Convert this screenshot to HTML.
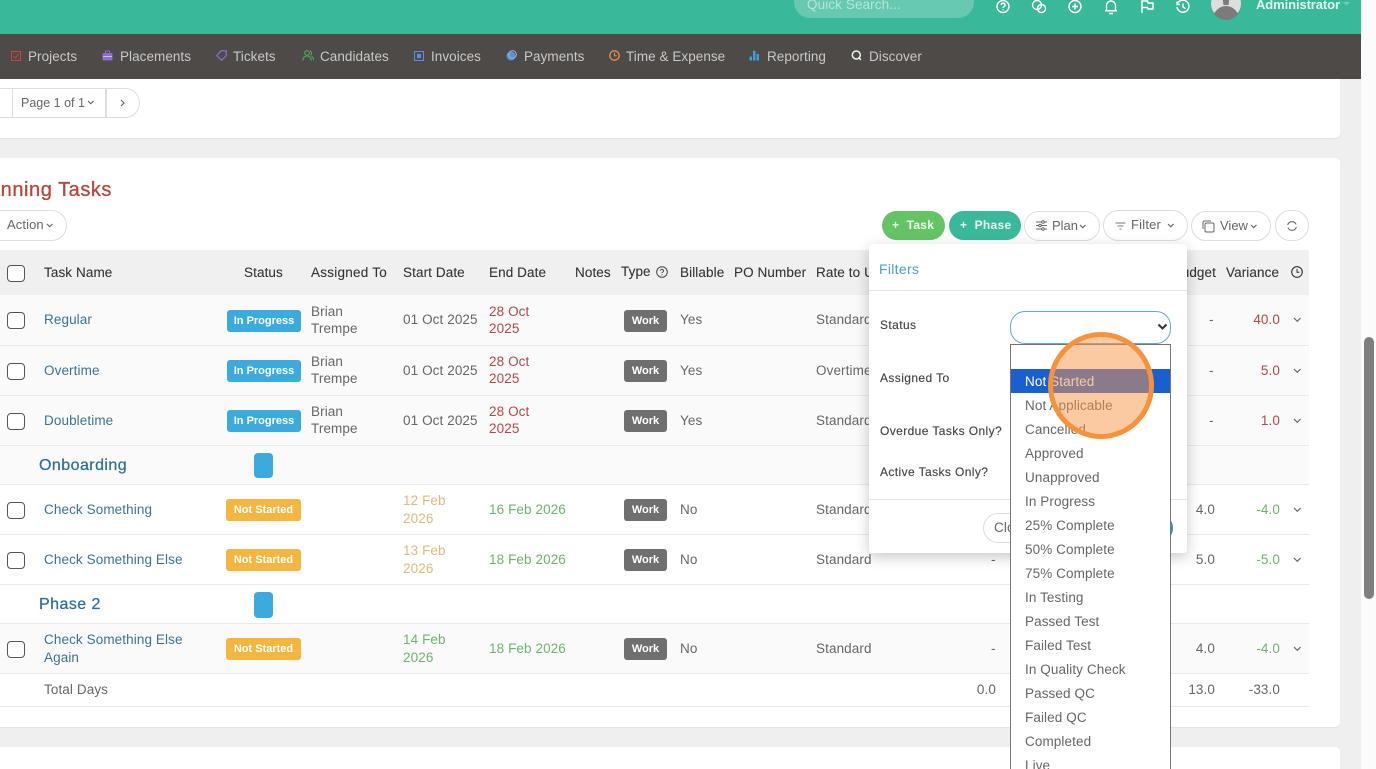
<!DOCTYPE html>
<html><head><meta charset="utf-8"><style>
html,body{margin:0;padding:0;width:1376px;height:769px;overflow:hidden;background:#efefef}
body{position:relative;font-family:"Liberation Sans",sans-serif;color:#666;font-size:13px}
.b{position:absolute}
.t{position:absolute;white-space:nowrap;line-height:16px;font-size:13.5px;letter-spacing:.1px;color:#666;margin-top:1px}
.s{font-size:13px;letter-spacing:0}
.f{font-size:12px;color:#444;letter-spacing:.4px;margin-top:0;-webkit-text-stroke:.15px #444}
.h{color:#333;-webkit-text-stroke:.1px #333}
.l{color:#3d7391}
.r{color:#b5474a}
.g{color:#6cb56c}
.y{color:#e3b87a}
.re{text-align:right}
.bd{position:absolute;height:22px;line-height:23px;border-radius:3px;color:#fff;font-weight:bold;font-size:11px;text-align:center;white-space:nowrap}
.ip{left:227px;width:74px;background:#3aabdc}
.ns{left:226px;width:75px;background:#f4b63f}
.w{left:624px;width:43px;background:#6f6f6f}
.cb{position:absolute;left:7px;width:16px;height:15px;border:1px solid #555;border-radius:4px;background:#fff}
.line{position:absolute;left:0;width:1309px;height:1px;background:#e9e9e9}
.pill{position:absolute;background:#fff;border:1px solid #ddd;border-radius:16px;box-sizing:border-box}
.nav{position:absolute;top:49px;line-height:16px;font-size:13.5px;color:#c9c9c9;letter-spacing:.05px;white-space:nowrap}
svg{position:absolute;overflow:visible}
.o{position:absolute;left:1025px;line-height:16px;font-size:13.5px;letter-spacing:.1px;color:#666;white-space:nowrap;margin-top:1px}
.ch{fill:none;stroke:#666;stroke-width:1.2}
.ti{fill:none;stroke:#fff;stroke-width:1.4}
.ph{font-size:16px;line-height:18px;color:#2f6f96;letter-spacing:.45px;-webkit-text-stroke:.25px #2f6f96}
</style></head><body>

<!-- right scrollbar track -->
<div class="b" style="left:1361px;top:0;width:15px;height:769px;background:#fbfbfb"></div>
<div class="b" style="left:1364px;top:337px;width:10px;height:262px;background:#7f7f7f;border-radius:5px"></div>

<!-- top bar -->
<div class="b" style="left:0;top:0;width:1361px;height:34px;background:#39b99a"></div>
<div class="b" style="left:794px;top:-14px;width:180px;height:32px;border-radius:16px;background:#66c9b0"></div>
<div class="t" style="left:807px;top:-4px;color:#b5e7da">Quick Search...</div>
<svg style="left:996px;top:0" width="15" height="15" viewBox="0 0 15 15"><circle class="ti" cx="7" cy="6.500" r="6"/><path class="ti" d="M5.200 5a1.900 1.900 0 1 1 2.600 1.800c-.6.300-.8.700-.8 1.200M7 9.400v1"/></svg>
<svg style="left:1031px;top:0" width="16" height="14" viewBox="0 0 16 14"><circle class="ti" cx="6" cy="5" r="4.500"/><circle class="ti" cx="10.500" cy="8.500" r="4"/></svg>
<svg style="left:1068px;top:0" width="14" height="14" viewBox="0 0 14 14"><circle class="ti" cx="7" cy="6.500" r="6"/><path class="ti" d="M7 3.500v6M4 6.500h6"/></svg>
<svg style="left:1104px;top:0" width="14" height="15" viewBox="0 0 14 15"><path class="ti" d="M2.500 10.500V5.500a4.500 4.500 0 0 1 9 0v5M1 10.800h12M5 13.500h4"/></svg>
<svg style="left:1141px;top:0" width="13" height="14" viewBox="0 0 13 14"><path class="ti" d="M1 13V1h5.500l.5 2h5v6H7l-.5-1.500H1"/></svg>
<svg style="left:1176px;top:0" width="14" height="14" viewBox="0 0 14 14"><path class="ti" d="M1.200 4.500A6 6 0 1 1 1 7M1 1.500v3h3M7 3.500v3.500l2.500 1.500"/></svg>
<svg style="left:1211px;top:-12px" width="30" height="31" viewBox="0 0 30 31"><circle cx="15" cy="15.500" r="15" fill="#dedede"/><path d="M3 26c3-6 8-8 12-8s9 2 12 8a15 15 0 0 1-24 0z" fill="#7b7b7b"/><path d="M11 6h8l-1.500 11h-5z" fill="#7b7b7b"/></svg>
<div class="t" style="left:1256px;top:-4px;color:#e6f7f2;font-weight:bold;font-size:13px;letter-spacing:-.1px">Administrator</div>
<svg style="left:1343px;top:2px" width="8" height="4"><path d="M0 0h7L3.500 3.500z" fill="#6fcdb5"/></svg>

<!-- nav -->
<div class="b" style="left:0;top:34px;width:1361px;height:45px;background:#4d4a48"></div>
<svg style="left:11px;top:51px" width="10" height="10"><rect x=".5" y=".5" width="9" height="9" fill="none" stroke="#c8473d"/><path d="M2.500 5l2 2 3-4" fill="none" stroke="#c8473d"/></svg>
<div class="nav" style="left:28px">Projects</div>
<svg style="left:102px;top:50px" width="11" height="11"><rect x=".5" y="3" width="10" height="7.500" rx="1" fill="#8a6fd0"/><path d="M3.500 3V1h4v2" fill="none" stroke="#8a6fd0"/><path d="M1 6.500h9" stroke="#c9bce8"/></svg>
<div class="nav" style="left:120px">Placements</div>
<svg style="left:216px;top:50px" width="11" height="11"><path d="M5 .8h5.200v5L5.500 10.300.8 5.600z" fill="none" stroke="#8a6fd0" stroke-width="1.200"/></svg>
<div class="nav" style="left:233px">Tickets</div>
<svg style="left:302px;top:50px" width="12" height="11"><g fill="none" stroke="#4cae5c" stroke-width="1.100"><circle cx="5" cy="3" r="2.300"/><path d="M.8 10.500c0-3 2-4.500 4.200-4.500s4.200 1.500 4.200 4.500M8 1c1.500.3 2 3 .5 4.300M9.500 6.500c1.200.6 2 2 2 3.500"/></g></svg>
<div class="nav" style="left:320px">Candidates</div>
<svg style="left:414px;top:51px" width="10" height="10"><rect x=".5" y=".5" width="9" height="9" fill="none" stroke="#5c8fd6"/><rect x="3" y="3" width="4" height="4" fill="#5c8fd6"/></svg>
<div class="nav" style="left:431px">Invoices</div>
<svg style="left:506px;top:50px" width="11" height="11"><circle cx="5" cy="6" r="4.500" fill="#5c8fd6"/><circle cx="6.500" cy="4.500" r="3.800" fill="none" stroke="#9dbde8" stroke-width=".9"/></svg>
<div class="nav" style="left:524px">Payments</div>
<svg style="left:609px;top:50px" width="11" height="11"><circle cx="5.500" cy="5.500" r="4.700" fill="none" stroke="#e48f4e" stroke-width="1.300"/><path d="M5.500 2.800v2.900h2.300" fill="none" stroke="#e48f4e"/></svg>
<div class="nav" style="left:626px">Time &amp; Expense</div>
<svg style="left:749px;top:50px" width="11" height="11"><path d="M.5 6.500h2.500v4H.5zM4 .8h2.500v9.700H4zM7.500 4H10v6.500H7.500z" fill="#3f9ed6"/></svg>
<div class="nav" style="left:767px">Reporting</div>
<svg style="left:851px;top:50px" width="12" height="12"><circle cx="5.300" cy="5" r="4" fill="none" stroke="#f2f2f2" stroke-width="1.500"/><path d="M7.500 7.500l2.500 2.300" stroke="#f2f2f2" stroke-width="1.500"/></svg>
<div class="nav" style="left:869px">Discover</div>

<!-- card 1 -->
<div class="b" style="left:-6px;top:79px;width:1346px;height:59px;background:#fff;border-radius:0 0 5px 5px;box-shadow:0 1px 1px #e2e2e2"></div>
<div class="pill" style="left:-30px;top:88px;width:170px;height:30px"></div>
<div class="b" style="left:12px;top:88px;width:1px;height:30px;background:#ddd"></div>
<div class="b" style="left:105px;top:88px;width:2px;height:30px;background:#ddd"></div>
<div class="t s" style="left:21px;top:94px;font-size:12.5px">Page 1 of 1</div>
<svg style="left:87px;top:100px" width="8" height="6"><path class="ch" d="M1 1l2.700 2.700L6.500 1"/></svg>
<svg style="left:120px;top:99px" width="6" height="8"><path class="ch" d="M1 1l3 3-3 3"/></svg>

<!-- card 2 -->
<div class="b" style="left:-6px;top:158px;width:1346px;height:569px;background:#fff;border-radius:5px;box-shadow:0 1px 1px #e2e2e2"></div>
<div class="t" style="right:1264px;top:177px;font-size:20px;line-height:24px;color:#b5473a;letter-spacing:.55px;-webkit-text-stroke:.3px #b5473a">Planning Tasks</div>

<div class="pill" style="left:-40px;top:210px;width:107px;height:31px"></div>
<div class="t s" style="left:7px;top:216px;letter-spacing:.1px">Action</div>
<svg style="left:46px;top:223px" width="8" height="6"><path class="ch" d="M1 1l2.700 2.700L6.500 1"/></svg>

<div class="b" style="left:882px;top:211px;width:63px;height:29px;border-radius:15px;background:#64c465"></div>
<div class="t" style="left:892px;top:216px;color:#eaf7ea;font-size:12px;font-weight:bold;letter-spacing:.3px">+&nbsp;&nbsp;Task</div>
<div class="b" style="left:949px;top:211px;width:72px;height:29px;border-radius:15px;background:#39b99a"></div>
<div class="t" style="left:960px;top:216px;color:#e5f6f1;font-size:12px;font-weight:bold;letter-spacing:.3px">+&nbsp; Phase</div>
<div class="pill" style="left:1024px;top:211px;width:76px;height:30px"></div>
<svg style="left:1036px;top:220px" width="11" height="11"><g stroke="#666" fill="#fff"><path d="M0 2h11M0 5.500h11M0 9h11"/><circle cx="7" cy="2" r="1.300"/><circle cx="4" cy="5.500" r="1.300"/><circle cx="7" cy="9" r="1.300"/></g></svg>
<div class="t s" style="left:1052px;top:217px">Plan</div>
<svg style="left:1079px;top:224px" width="8" height="6"><path class="ch" d="M1 1l2.700 2.700L6.500 1"/></svg>
<div class="pill" style="left:1103px;top:210px;width:85px;height:31px"></div>
<svg style="left:1115px;top:222px" width="11" height="8"><path d="M.5 1h10M2.500 4h6M4.500 7h2" stroke="#777" fill="none"/></svg>
<div class="t s" style="left:1131px;top:216px;letter-spacing:.2px">Filter</div>
<svg style="left:1167px;top:223px" width="8" height="6"><path class="ch" d="M1 1l2.700 2.700L6.500 1"/></svg>
<div class="pill" style="left:1191px;top:211px;width:80px;height:30px"></div>
<svg style="left:1202px;top:220px" width="13" height="13"><rect x="3" y="3" width="9" height="9" rx="1.500" fill="none" stroke="#666"/><path d="M1 9V2.500A1.500 1.500 0 0 1 2.500 1H9" fill="none" stroke="#666"/></svg>
<div class="t s" style="left:1220px;top:217px">View</div>
<svg style="left:1250px;top:224px" width="8" height="6"><path class="ch" d="M1 1l2.700 2.700L6.500 1"/></svg>
<div class="pill" style="left:1275px;top:210px;width:34px;height:31px"></div>
<svg style="left:1287px;top:221px" width="10" height="10"><path d="M.7 4A4.400 4.400 0 0 1 9 3.300M9.300 6A4.400 4.400 0 0 1 1 6.700" fill="none" stroke="#666" stroke-width="1.100"/></svg>

<!-- table backgrounds -->
<div class="b" style="left:0;top:250px;width:1309px;height:45px;background:#f0f0f0"></div>
<div class="b" style="left:0;top:295px;width:1309px;height:189px;background:#fafafa"></div>
<div class="b" style="left:0;top:623px;width:1309px;height:50px;background:#fafafa"></div>
<div class="line" style="top:345px"></div>
<div class="line" style="top:395px"></div>
<div class="line" style="top:445px"></div>
<div class="line" style="top:484px"></div>
<div class="line" style="top:534px"></div>
<div class="line" style="top:584px"></div>
<div class="line" style="top:623px"></div>
<div class="line" style="top:673px"></div>
<div class="line" style="top:706px"></div>

<!-- header -->
<div class="cb" style="top:265px"></div>
<div class="t h" style="left:44px;top:264px">Task Name</div>
<div class="t h" style="left:244px;top:264px">Status</div>
<div class="t h" style="left:311px;top:264px;letter-spacing:.25px">Assigned To</div>
<div class="t h" style="left:403px;top:264px">Start Date</div>
<div class="t h" style="left:489px;top:264px">End Date</div>
<div class="t h" style="left:575px;top:264px">Notes</div>
<div class="t h" style="left:621px;top:263px">Type</div>
<svg style="left:656px;top:266px" width="12" height="12"><circle cx="6" cy="6" r="5.300" fill="none" stroke="#444"/><path d="M4.500 4.700a1.500 1.500 0 1 1 2.200 1.400c-.5.300-.7.500-.7 1M6 8.300v1" fill="none" stroke="#444"/></svg>
<div class="t h" style="left:680px;top:264px">Billable</div>
<div class="t h" style="left:734px;top:264px">PO Number</div>
<div class="t h" style="left:816px;top:264px">Rate to Use</div>
<div class="t h re" style="left:1146px;width:70px;top:264px">Budget</div>
<div class="t h" style="left:1226px;top:264px">Variance</div>
<svg style="left:1291px;top:266px" width="12" height="12"><circle cx="6" cy="6" r="5.300" fill="none" stroke="#333" stroke-width="1.100"/><path d="M6 3v3.300h2.500" fill="none" stroke="#333"/></svg>

<!-- row 1 -->
<div class="cb" style="top:312px"></div>
<div class="t l" style="left:44px;top:311px">Regular</div>
<div class="bd ip" style="top:310px">In Progress</div>
<div class="t" style="left:311px;top:303px">Brian</div><div class="t" style="left:311px;top:320px">Trempe</div>
<div class="t" style="left:403px;top:311px">01 Oct 2025</div>
<div class="t r" style="left:489px;top:303px">28 Oct</div><div class="t r" style="left:489px;top:320px">2025</div>
<div class="bd w" style="top:310px">Work</div>
<div class="t" style="left:680px;top:311px">Yes</div>
<div class="t" style="left:816px;top:311px">Standard</div>
<div class="t" style="left:1209px;top:311px">-</div>
<div class="t r re" style="left:1230px;width:50px;top:311px">40.0</div>
<svg style="left:1293px;top:317px" width="9" height="6"><path class="ch" d="M1 1l3.300 3.300L7.600 1"/></svg>

<!-- row 2 -->
<div class="cb" style="top:363px"></div>
<div class="t l" style="left:44px;top:362px">Overtime</div>
<div class="bd ip" style="top:360px">In Progress</div>
<div class="t" style="left:311px;top:353px">Brian</div><div class="t" style="left:311px;top:370px">Trempe</div>
<div class="t" style="left:403px;top:362px">01 Oct 2025</div>
<div class="t r" style="left:489px;top:353px">28 Oct</div><div class="t r" style="left:489px;top:370px">2025</div>
<div class="bd w" style="top:360px">Work</div>
<div class="t" style="left:680px;top:362px">Yes</div>
<div class="t" style="left:816px;top:362px">Overtime</div>
<div class="t" style="left:1209px;top:362px">-</div>
<div class="t r re" style="left:1230px;width:50px;top:362px">5.0</div>
<svg style="left:1293px;top:368px" width="9" height="6"><path class="ch" d="M1 1l3.300 3.300L7.600 1"/></svg>

<!-- row 3 -->
<div class="cb" style="top:413px"></div>
<div class="t l" style="left:44px;top:412px">Doubletime</div>
<div class="bd ip" style="top:410px">In Progress</div>
<div class="t" style="left:311px;top:403px">Brian</div><div class="t" style="left:311px;top:420px">Trempe</div>
<div class="t" style="left:403px;top:412px">01 Oct 2025</div>
<div class="t r" style="left:489px;top:403px">28 Oct</div><div class="t r" style="left:489px;top:420px">2025</div>
<div class="bd w" style="top:410px">Work</div>
<div class="t" style="left:680px;top:412px">Yes</div>
<div class="t" style="left:816px;top:412px">Standard</div>
<div class="t" style="left:1209px;top:412px">-</div>
<div class="t r re" style="left:1230px;width:50px;top:412px">1.0</div>
<svg style="left:1293px;top:418px" width="9" height="6"><path class="ch" d="M1 1l3.300 3.300L7.600 1"/></svg>

<!-- phase onboarding -->
<div class="t ph" style="left:39px;top:456px">Onboarding</div>
<div class="b" style="left:254px;top:453px;width:19px;height:25px;border-radius:4px;background:#3aabdc"></div>

<!-- row 4 -->
<div class="cb" style="top:502px"></div>
<div class="t l" style="left:44px;top:501px">Check Something</div>
<div class="bd ns" style="top:499px">Not Started</div>
<div class="t y" style="left:403px;top:492px">12 Feb</div><div class="t y" style="left:403px;top:510px">2026</div>
<div class="t g" style="left:489px;top:501px">16 Feb 2026</div>
<div class="bd w" style="top:499px">Work</div>
<div class="t" style="left:680px;top:501px">No</div>
<div class="t" style="left:816px;top:501px">Standard</div>
<div class="t re" style="left:1165px;width:50px;top:501px">4.0</div>
<div class="t g re" style="left:1230px;width:50px;top:501px">-4.0</div>
<svg style="left:1293px;top:507px" width="9" height="6"><path class="ch" d="M1 1l3.300 3.300L7.600 1"/></svg>

<!-- row 5 -->
<div class="cb" style="top:552px"></div>
<div class="t l" style="left:44px;top:551px">Check Something Else</div>
<div class="bd ns" style="top:549px">Not Started</div>
<div class="t y" style="left:403px;top:542px">13 Feb</div><div class="t y" style="left:403px;top:560px">2026</div>
<div class="t g" style="left:489px;top:551px">18 Feb 2026</div>
<div class="bd w" style="top:549px">Work</div>
<div class="t" style="left:680px;top:551px">No</div>
<div class="t" style="left:816px;top:551px">Standard</div>
<div class="t" style="left:991px;top:551px">-</div>
<div class="t re" style="left:1165px;width:50px;top:551px">5.0</div>
<div class="t g re" style="left:1230px;width:50px;top:551px">-5.0</div>
<svg style="left:1293px;top:557px" width="9" height="6"><path class="ch" d="M1 1l3.300 3.300L7.600 1"/></svg>

<!-- phase 2 -->
<div class="t ph" style="left:39px;top:595px">Phase 2</div>
<div class="b" style="left:254px;top:592px;width:19px;height:26px;border-radius:4px;background:#3aabdc"></div>

<!-- row 6 -->
<div class="cb" style="top:641px"></div>
<div class="t l" style="left:44px;top:631px">Check Something Else</div><div class="t l" style="left:44px;top:649px">Again</div>
<div class="bd ns" style="top:638px">Not Started</div>
<div class="t g" style="left:403px;top:631px">14 Feb</div><div class="t g" style="left:403px;top:649px">2026</div>
<div class="t g" style="left:489px;top:640px">18 Feb 2026</div>
<div class="bd w" style="top:638px">Work</div>
<div class="t" style="left:680px;top:640px">No</div>
<div class="t" style="left:816px;top:640px">Standard</div>
<div class="t" style="left:991px;top:640px">-</div>
<div class="t re" style="left:1165px;width:50px;top:640px">4.0</div>
<div class="t g re" style="left:1230px;width:50px;top:640px">-4.0</div>
<svg style="left:1293px;top:646px" width="9" height="6"><path class="ch" d="M1 1l3.300 3.300L7.600 1"/></svg>

<!-- total -->
<div class="t" style="left:44px;top:681px">Total Days</div>
<div class="t re" style="left:946px;width:50px;top:681px">0.0</div>
<div class="t re" style="left:1165px;width:50px;top:681px">13.0</div>
<div class="t re" style="left:1230px;width:50px;top:681px">-33.0</div>

<!-- card 3 -->
<div class="b" style="left:-6px;top:747px;width:1346px;height:40px;background:#fff;border-radius:5px"></div>

<!-- filter panel -->
<div class="b" style="left:869px;top:244px;width:318px;height:309px;background:#fff;border-radius:3px;box-shadow:0 4px 14px rgba(0,0,0,.22)"></div>
<div class="t" style="left:879px;top:260px;font-size:14px;color:#4b9fc9;letter-spacing:.3px">Filters</div>
<div class="b" style="left:869px;top:290px;width:318px;height:1px;background:#e4e4e4"></div>
<div class="b" style="left:869px;top:499px;width:318px;height:1px;background:#e4e4e4"></div>
<div class="t f" style="left:880px;top:317px">Status</div>
<div class="t f" style="left:880px;top:370px">Assigned To</div>
<div class="t f" style="left:880px;top:423px">Overdue Tasks Only?</div>
<div class="t f" style="left:880px;top:464px">Active Tasks Only?</div>
<div class="pill" style="left:983px;top:513px;width:60px;height:30px"></div>
<div class="t" style="left:994px;top:519px">Close</div>
<div class="b" style="left:1140px;top:513px;width:33px;height:30px;border-radius:15px;background:#2f8fbf"></div>

<!-- select -->
<div class="b" style="left:1010px;top:311px;width:161px;height:33px;box-sizing:border-box;border:1px solid #6aa9c6;border-radius:15px;background:#fff"></div>
<svg style="left:1157px;top:323px" width="11" height="8"><path d="M1.500 1.500l4 4 4-4" fill="none" stroke="#333" stroke-width="2"/></svg>

<!-- dropdown -->
<div class="b" style="left:1010px;top:344px;width:161px;height:440px;box-sizing:border-box;border:1px solid #767676;background:#fff"></div>
<div class="b" style="left:1011px;top:369px;width:159px;height:24px;background:#1a5fd0"></div>
<div class="o" style="top:373px;color:#fff">Not Started</div>
<div class="o" style="top:397px">Not Applicable</div>
<div class="o" style="top:421px">Cancelled</div>
<div class="o" style="top:445px">Approved</div>
<div class="o" style="top:469px">Unapproved</div>
<div class="o" style="top:493px">In Progress</div>
<div class="o" style="top:517px">25% Complete</div>
<div class="o" style="top:541px">50% Complete</div>
<div class="o" style="top:565px">75% Complete</div>
<div class="o" style="top:589px">In Testing</div>
<div class="o" style="top:613px">Passed Test</div>
<div class="o" style="top:637px">Failed Test</div>
<div class="o" style="top:661px">In Quality Check</div>
<div class="o" style="top:685px">Passed QC</div>
<div class="o" style="top:709px">Failed QC</div>
<div class="o" style="top:733px">Completed</div>
<div class="o" style="top:757px">Live</div>

<!-- highlight circle -->
<div class="b" style="left:1048px;top:332px;width:106px;height:107px;box-sizing:border-box;border:5px solid #f5923a;border-radius:50%;background:rgba(250,150,70,.5)"></div>

</body></html>
